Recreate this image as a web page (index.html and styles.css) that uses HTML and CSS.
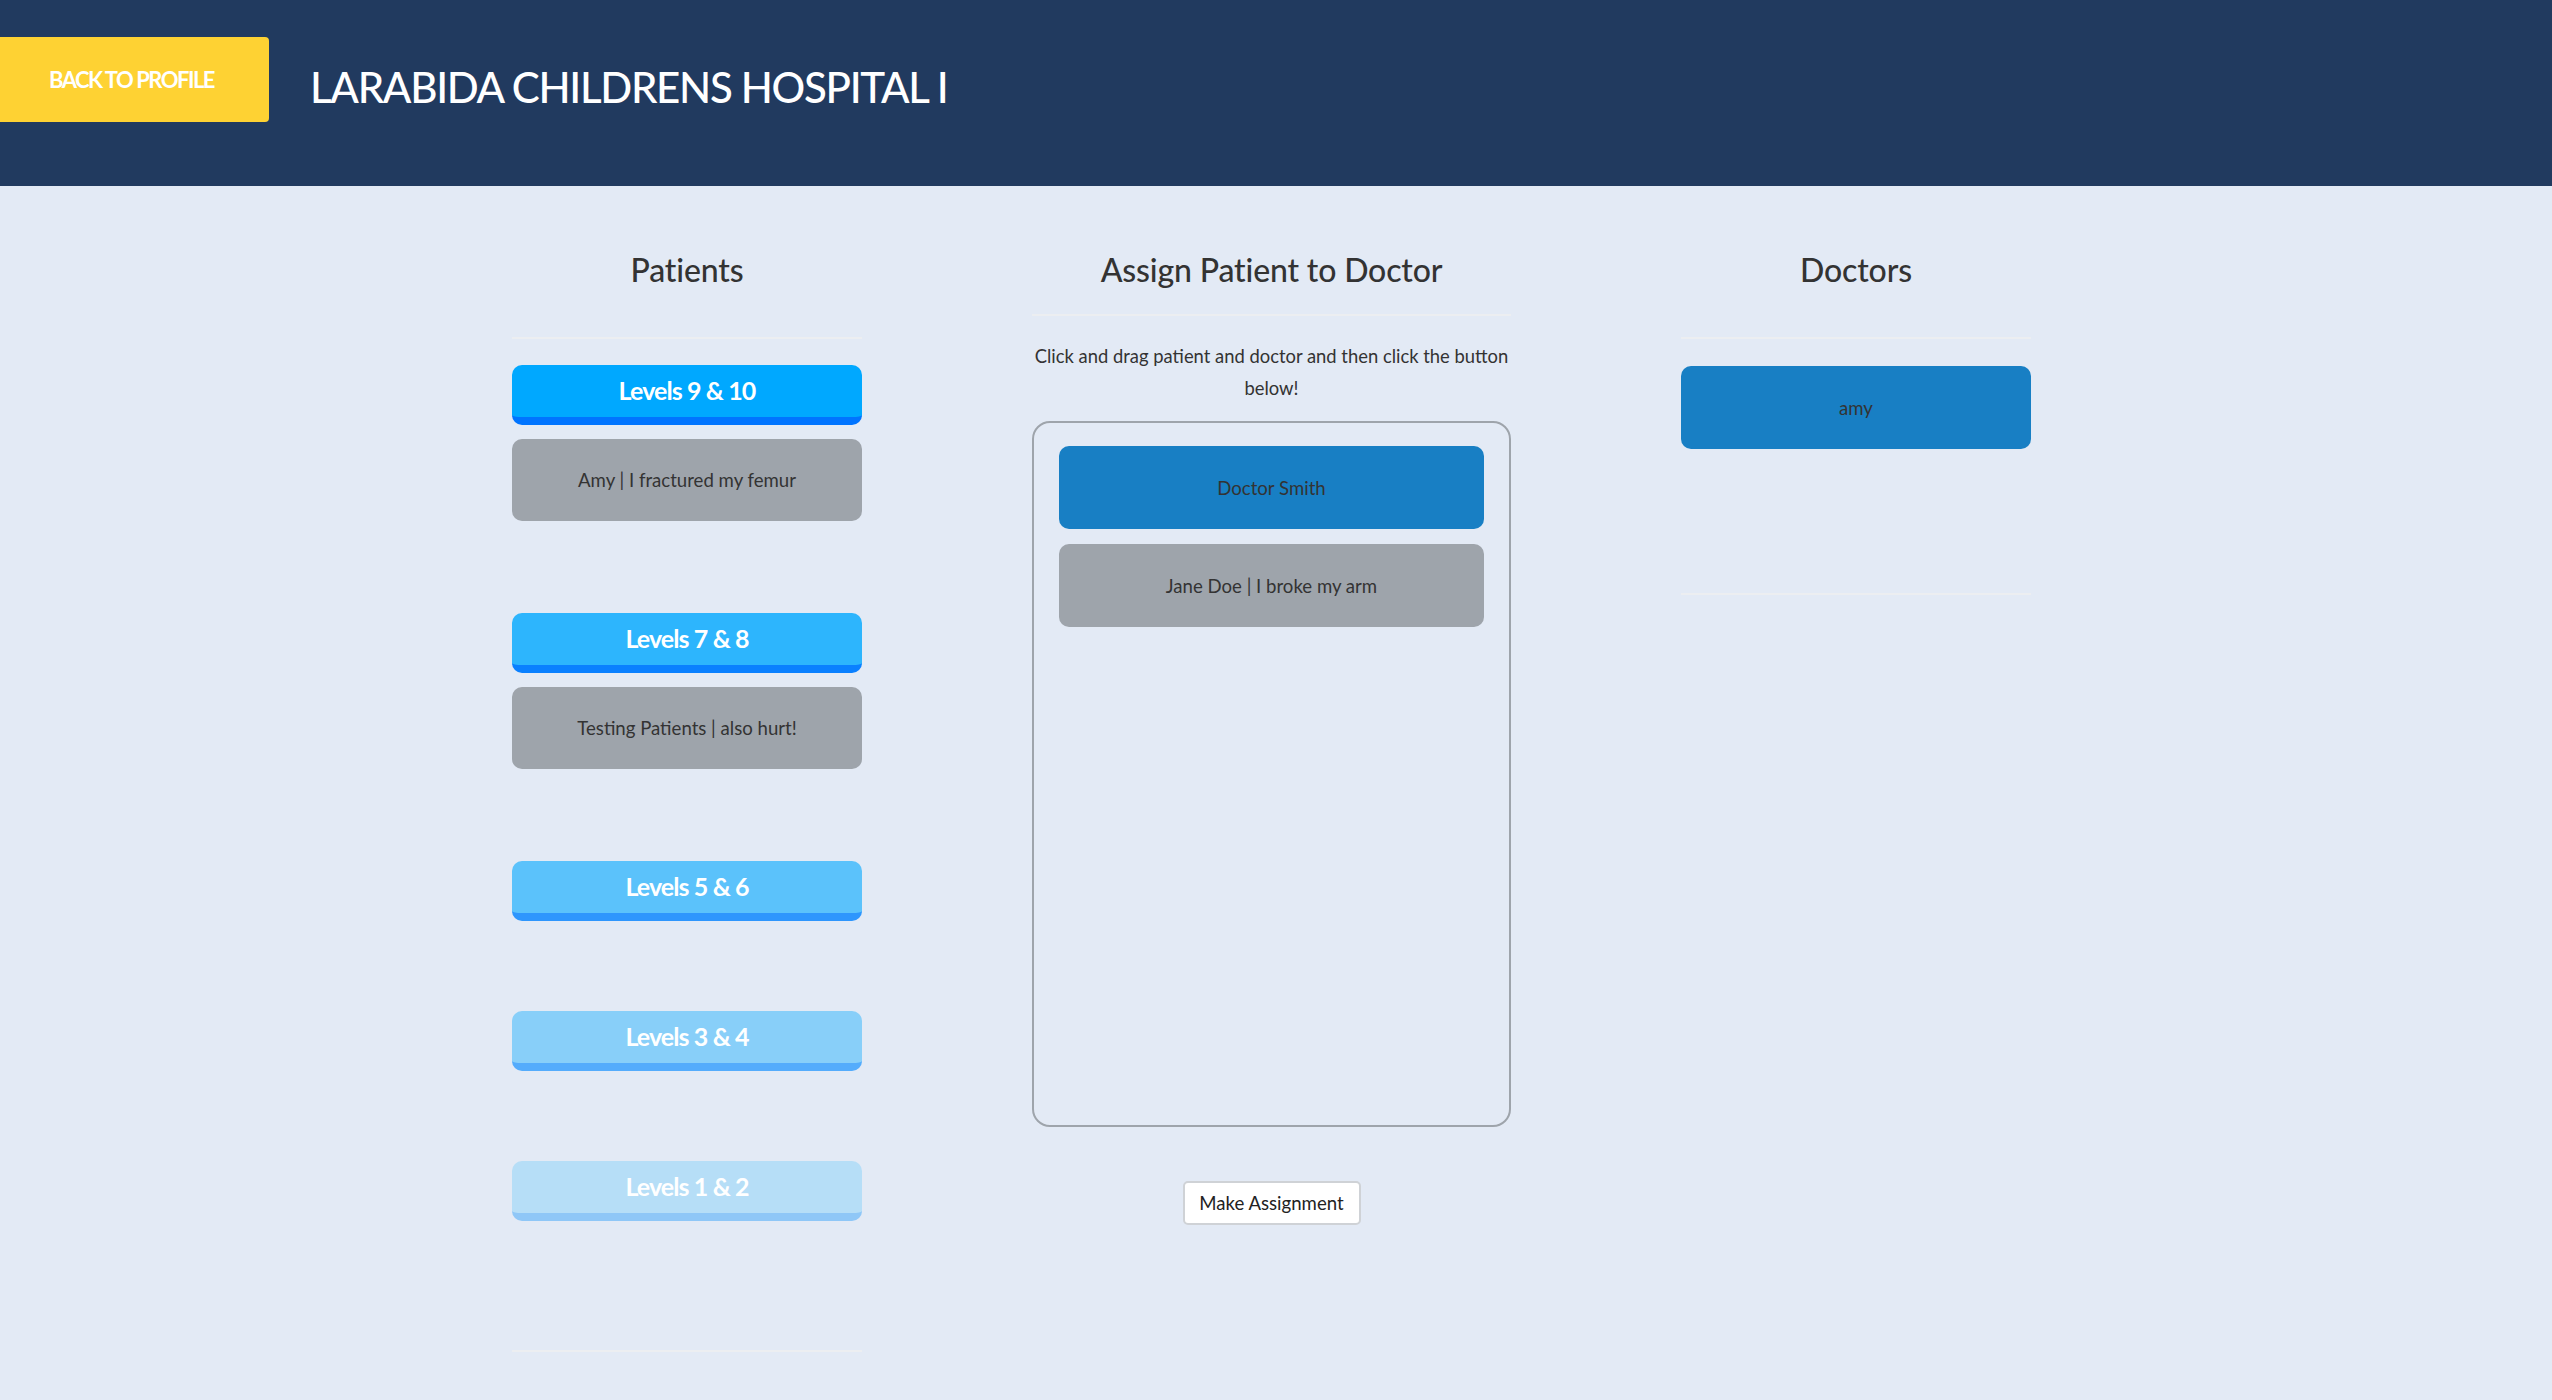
FILE: index.html
```html
<!DOCTYPE html>
<html lang="en">
<head>
<meta charset="utf-8">
<title>Assign Patients</title>
<link rel="stylesheet" href="styles.css">
</head>
<body>
<header class="topbar">
  <a class="back-btn" href="#">BACK TO PROFILE</a>
  <h1 class="hospital">LARABIDA CHILDRENS HOSPITAL I</h1>
</header>
<main class="board">
  <section class="col side patients">
    <h2 class="col-title">Patients</h2>
    <hr class="rule">
    <div class="group first">
      <div class="level lv10">Levels 9 &amp; 10</div>
      <div class="drop">
        <div class="card gray">Amy | I fractured my femur</div>
      </div>
    </div>
    <div class="group">
      <div class="level lv8">Levels 7 &amp; 8</div>
      <div class="drop">
        <div class="card gray">Testing Patients | also hurt!</div>
      </div>
    </div>
    <div class="group">
      <div class="level lv6">Levels 5 &amp; 6</div>
      <div class="drop"></div>
    </div>
    <div class="group">
      <div class="level lv4">Levels 3 &amp; 4</div>
      <div class="drop"></div>
    </div>
    <div class="group">
      <div class="level lv2">Levels 1 &amp; 2</div>
      <div class="drop"></div>
    </div>
    <hr class="rule end-patients">
  </section>
  <section class="col center">
    <h2 class="col-title">Assign Patient to Doctor</h2>
    <hr class="rule rule-center">
    <p class="hint">Click and drag patient and doctor and then click the button below!</p>
    <div class="dropbox">
      <div class="card blue">Doctor Smith</div>
      <div class="card gray">Jane Doe | I broke my arm</div>
    </div>
    <div class="actions"><button class="assign" type="button">Make Assignment</button></div>
  </section>
  <section class="col side doctors">
    <h2 class="col-title">Doctors</h2>
    <hr class="rule">
    <div class="doc-list">
      <div class="card blue">amy</div>
    </div>
    <hr class="rule end-doctors">
  </section>
</main>
</body>
</html>
```
FILE: styles.css
```css
html, body {
  margin: 0;
  padding: 0;
}
body {
  background: #e3eaf5;
  font-family: Lato, "Open Sans", "Liberation Sans", sans-serif;
  color: #333;
  min-height: 1400px;
}
.topbar {
  background: #213a5f;
  height: 186px;
  display: flex;
  align-items: flex-start;
}
.back-btn {
  margin-top: 37px;
  width: 269px;
  height: 85px;
  box-sizing: border-box;
  padding: 2px 6px 0 0;
  background: #fed233;
  border-radius: 0 4px 4px 0;
  color: #fff;
  font-weight: 700;
  font-size: 22px;
  letter-spacing: -1.5px;
  text-decoration: none;
  display: flex;
  align-items: center;
  justify-content: center;
  line-height: 1.2;
}
.hospital {
  margin: 62px 0 0 41px;
  font-size: 42px;
  line-height: 1.2;
  font-weight: 500;
  color: #fff;
  letter-spacing: -1.3px;
}
.board {
  display: flex;
  justify-content: center;
  align-items: flex-start;
  gap: 170px;
  padding-right: 9px;
}
.col {
  display: flex;
  flex-direction: column;
}
.side { width: 350px; }
.center { width: 479px; }
.col-title {
  margin: 65px 0 0;
  font-size: 32px;
  line-height: 1.2;
  font-weight: 500;
  letter-spacing: -0.15px;
  text-align: center;
  color: #333;
}
.rule {
  border: 0;
  border-top: 2px solid #eceef1;
  margin: 48px 0 0;
  width: 100%;
}
.rule-center { margin-top: 25px; }
.group {
  display: flex;
  flex-direction: column;
  margin-top: 76px;
}
.group.first { margin-top: 26px; }
.level {
  height: 52px;
  border-bottom: 8px solid #0074ff;
  border-radius: 10px;
  color: #fff;
  font-weight: 700;
  font-size: 25px;
  letter-spacing: -0.9px;
  line-height: 50px;
  text-align: center;
}
.lv10 { background: #00a8ff; border-bottom-color: #0074ff; }
.lv8 { background: #2db5fd; border-bottom-color: #0a80ff; }
.lv6 { background: #5bc2fb; border-bottom-color: #2e96fd; }
.lv4 { background: #88cff9; border-bottom-color: #54acfc; }
.lv2 { background: #b6def7; border-bottom-color: #8fc7f7; }
.drop {
  padding-top: 14px;
  display: flex;
  flex-direction: column;
}
.card {
  height: 82px;
  border-radius: 10px;
  display: flex;
  align-items: center;
  justify-content: center;
  font-size: 18.6px;
  color: #333;
}
.drop .card { margin-bottom: 16px; }
.gray { background: #9ea4ab; }
.blue { background: #187fc4; }
.end-patients { margin-top: 115px; }
.hint {
  margin: 25px 0 0;
  font-size: 18.4px;
  line-height: 31.5px;
  text-align: center;
  color: #333;
}
.dropbox {
  margin-top: 17px;
  height: 706px;
  box-sizing: border-box;
  border: 2px solid #9ea4ab;
  border-radius: 18px;
  padding: 23px 25px;
  display: flex;
  flex-direction: column;
  gap: 15px;
}
.dropbox .card { height: 83px; }
.actions {
  display: flex;
  justify-content: center;
  margin-top: 54px;
}
.assign {
  width: 178px;
  height: 44px;
  background: #fff;
  border: 2px solid #cfd2d6;
  border-radius: 5px;
  font-family: Lato, "Open Sans", "Liberation Sans", sans-serif;
  font-size: 18.6px;
  color: #222;
  padding: 0;
}
.doc-list {
  margin-top: 27px;
  display: flex;
  flex-direction: column;
}
.doc-list .card { height: 83px; }
.end-doctors { margin-top: 144px; }
```
